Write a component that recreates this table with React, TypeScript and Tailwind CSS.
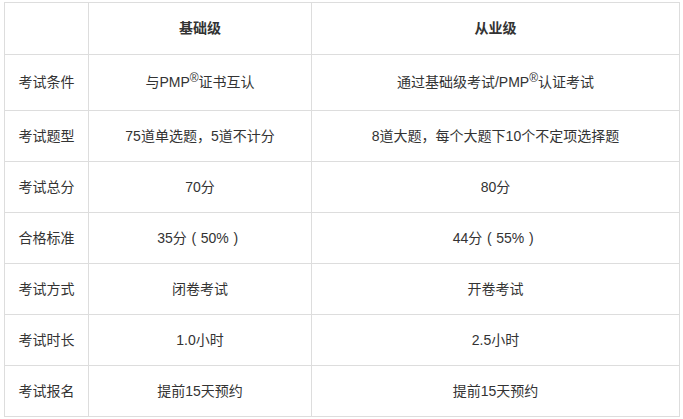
const Reg = () => <span className="relative -top-[5px] text-[12px]">®</span>;
const Paren = ({ c }: { c: string }) => <span className="inline-block w-[14px] text-center">{c}</span>;

const rows: { label: string; basic: React.ReactNode; pro: React.ReactNode; tall?: boolean }[] = [
  {
    label: '考试条件',
    basic: (
      <>
        与PMP<Reg />证书互认
      </>
    ),
    pro: (
      <>
        通过基础级考试/PMP<Reg />认证考试
      </>
    ),
    tall: true,
  },
  { label: '考试题型', basic: '75道单选题，5道不计分', pro: '8道大题，每个大题下10个不定项选择题' },
  { label: '考试总分', basic: '70分', pro: '80分' },
  {
    label: '合格标准',
    basic: (
      <>
        35分<Paren c="(" />50%<Paren c=")" />
      </>
    ),
    pro: (
      <>
        44分<Paren c="(" />55%<Paren c=")" />
      </>
    ),
  },
  { label: '考试方式', basic: '闭卷考试', pro: '开卷考试' },
  { label: '考试时长', basic: '1.0小时', pro: '2.5小时' },
  { label: '考试报名', basic: '提前15天预约', pro: '提前15天预约' },
];

export default function App() {
  return (
    <div
      className="min-h-[419px] bg-white pl-1 pt-0.5 text-[14px] text-[#333]"
      style={{ fontFamily: '"Liberation Sans", "Noto Sans CJK SC", sans-serif' }}
    >
      <table className="w-[675px] table-fixed border-collapse">
        <colgroup>
          <col className="w-[84px]" />
          <col className="w-[223px]" />
          <col className="w-[368px]" />
        </colgroup>
        <thead>
          <tr className="h-[52px]">
            <th className="border border-[#dddddd]" />
            <th className="border border-[#dddddd] font-bold">基础级</th>
            <th className="border border-[#dddddd] font-bold">从业级</th>
          </tr>
        </thead>
        <tbody>
          {rows.map((r) => (
            <tr key={r.label} className={r.tall ? 'h-[56px]' : 'h-[51px]'}>
              <td className="border border-[#dddddd] text-center">{r.label}</td>
              <td className="border border-[#dddddd] text-center">{r.basic}</td>
              <td className="border border-[#dddddd] text-center">{r.pro}</td>
            </tr>
          ))}
        </tbody>
      </table>
    </div>
  );
}
